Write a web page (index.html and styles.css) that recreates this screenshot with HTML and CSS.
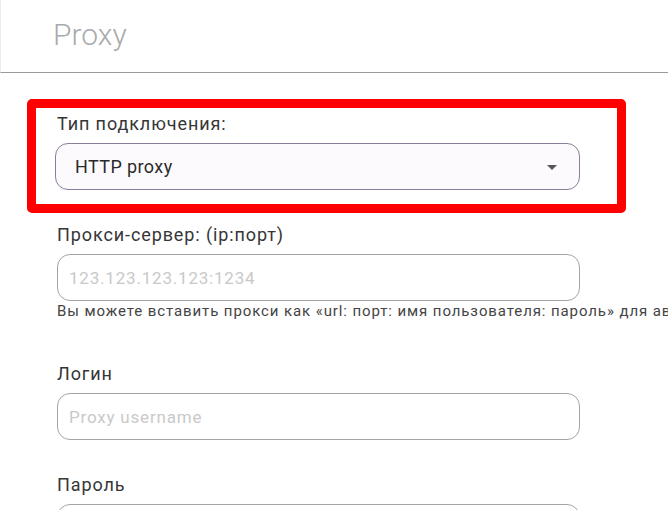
FILE: index.html
```html
<!DOCTYPE html>
<html lang="ru">
<head>
    <meta charset="UTF-8">
    <meta name="viewport" content="width=device-width, initial-scale=1.0">
    <title>Proxy</title>
    <link rel="stylesheet" href="styles.css">
</head>
<body>

    <div class="page-header">
        <h1>Proxy</h1>
    </div>

    <div class="proxy-form">
        <!-- Connection type, highlighted -->
        <div class="field field-marked">
            <label>Тип подключения:</label>
            <div class="select-box">
                <span>HTTP proxy</span>
                <svg width="10" height="5" viewBox="0 0 10 5"><path d="M0 0 L10 0 L5 5 Z" fill="#555"/></svg>
            </div>
            <div class="highlight"></div>
        </div>

        <div class="field">
            <label>Прокси-сервер: (ip:порт)</label>
            <input type="text" placeholder="123.123.123.123:1234">
            <p class="hint">Вы можете вставить прокси как «url: порт: имя пользователя: пароль» для автозаполнения</p>
        </div>

        <div class="field">
            <label>Логин</label>
            <input type="text" placeholder="Proxy username">
        </div>

        <div class="field">
            <label>Пароль</label>
            <input type="password" placeholder="Proxy password">
        </div>
    </div>

</body>
</html>
```

FILE: styles.css
```css
body {
    margin: 0;
    font-family: Roboto, "Liberation Sans", sans-serif;
    background: #fff;
    overflow: hidden;
}
.page-header {
    height: 73px;
    box-sizing: border-box;
    padding: 20px 0 0 52px;
    border-left: 1px solid #ececec;
    border-bottom: 1px solid #9a9a9a;
}
.page-header h1 {
    margin: 0;
    font-size: 30px;
    line-height: 30px;
    font-weight: 300;
    color: #a8abae;
}
.proxy-form {
    padding: 41px 0 0 57px;
}
.field {
    margin-bottom: 35px;
}
.field-marked {
    position: relative;
}
.field label {
    display: block;
    font-size: 18px;
    line-height: 20px;
    letter-spacing: 0.9px;
    color: #363636;
    margin-bottom: 9px;
}
.select-box {
    display: flex;
    align-items: center;
    justify-content: space-between;
    width: 525px;
    height: 47px;
    margin-left: -2px;
    box-sizing: border-box;
    padding: 0 22px 0 19px;
    border: 1px solid #8a7e98;
    border-radius: 13px;
    background: #fdfafe;
    font-size: 18px;
    letter-spacing: 0.4px;
    color: #2a2a2a;
}
.select-box svg {
    margin-top: 1px;
}
.highlight {
    position: absolute;
    left: -30px;
    top: -15px;
    width: 599px;
    height: 114px;
    box-sizing: border-box;
    border: 9px solid #ff0000;
    border-radius: 5px;
}
.field input {
    display: block;
    width: 523px;
    height: 47px;
    box-sizing: border-box;
    padding: 0 11px;
    border: 1px solid #a4a4a4;
    border-radius: 13px;
    font-family: inherit;
    font-size: 17px;
    letter-spacing: 0.8px;
    color: #222;
    background: #fff;
}
.field input::placeholder {
    color: #c9c9c9;
}
.hint {
    margin: 2px 0 44px;
    font-size: 15px;
    line-height: 17px;
    letter-spacing: 0.9px;
    color: #444;
    white-space: nowrap;
}
```
